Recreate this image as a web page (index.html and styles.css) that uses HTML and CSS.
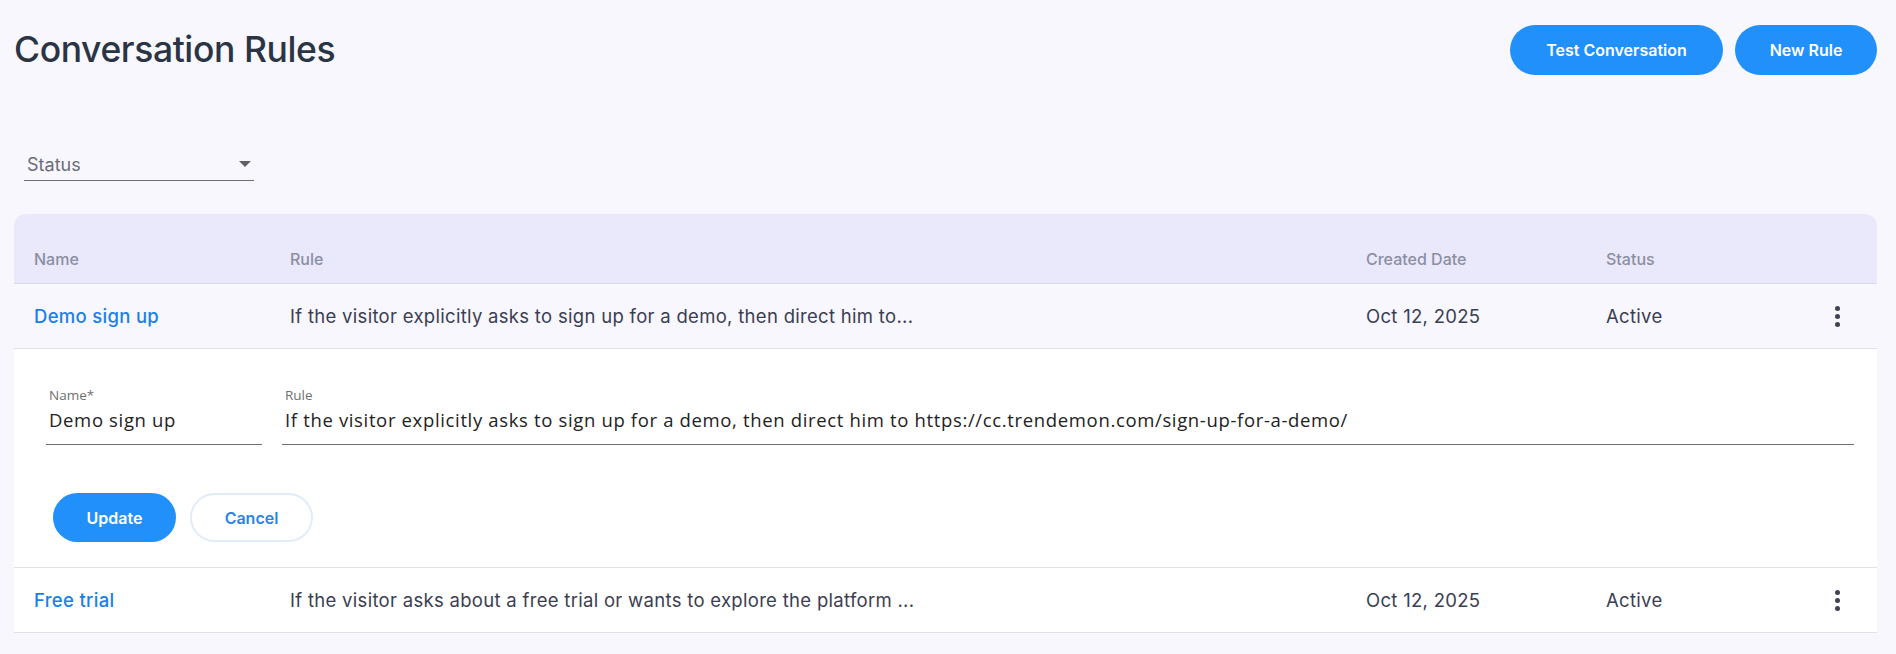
FILE: index.html
```html
<!DOCTYPE html>
<html>
<head>
  <title>Conversation Rules</title>
  <link rel="stylesheet" href="styles.css">
</head>
<body>
  <div class="page">
    <div class="top">
      <h1>Conversation Rules</h1>
      <div class="actions">
        <button class="btn btn-primary btn-test">Test Conversation</button>
        <button class="btn btn-primary btn-new">New Rule</button>
      </div>
    </div>

    <div class="filter">
      <span>Status</span>
      <span class="caret"></span>
    </div>

    <div class="card">
      <div class="row head">
        <div>Name</div>
        <div>Rule</div>
        <div>Created Date</div>
        <div>Status</div>
        <div></div>
      </div>

      <div class="row selected">
        <div class="name">Demo sign up</div>
        <div>If the visitor explicitly asks to sign up for a demo, then direct him to...</div>
        <div>Oct 12, 2025</div>
        <div>Active</div>
        <div class="more"><span></span><span></span><span></span></div>
      </div>

      <div class="editor">
        <div class="fields">
          <div class="field field-name">
            <label>Name*</label>
            <div class="value">Demo sign up</div>
          </div>
          <div class="field field-rule">
            <label>Rule</label>
            <div class="value">If the visitor explicitly asks to sign up for a demo, then direct him to https://cc.trendemon.com/sign-up-for-a-demo/</div>
          </div>
        </div>
        <div class="editor-actions">
          <button class="btn btn-primary btn-small">Update</button>
          <button class="btn btn-outline btn-small">Cancel</button>
        </div>
      </div>

      <div class="row">
        <div class="name">Free trial</div>
        <div>If the visitor asks about a free trial or wants to explore the platform ...</div>
        <div>Oct 12, 2025</div>
        <div>Active</div>
        <div class="more"><span></span><span></span><span></span></div>
      </div>
    </div>
  </div>
</body>
</html>
```

FILE: styles.css
```css
body {
  margin: 0;
  background: #f7f7fd;
  font-family: "Inter", "Liberation Sans", sans-serif;
  color: #3b3e52;
}

.page {
  padding: 25px 19px 0 14px;
}

.top {
  display: flex;
  justify-content: space-between;
  align-items: flex-start;
}

h1 {
  margin: 0;
  font-size: 35.5px;
  line-height: 50px;
  font-weight: 500;
  color: #2b3445;
  letter-spacing: -0.4px;
}

.actions {
  display: flex;
  gap: 12px;
}

.btn {
  border: none;
  border-radius: 25px;
  height: 50px;
  font-family: "Inter", "Liberation Sans", sans-serif;
  font-size: 16px;
  font-weight: 600;
  cursor: pointer;
}

.btn-primary {
  background: #2190fb;
  color: #fff;
}

.btn-test { width: 213px; }
.btn-new { width: 142px; }

.btn-small {
  width: 123px;
  height: 49px;
}

.btn-outline {
  background: #fff;
  color: #2a84e6;
  border: 2px solid #e1ecf8;
}

/* status filter */
.filter {
  margin: 73px 0 0 10px;
  width: 230px;
  height: 33px;
  border-bottom: 1px solid #6e6e78;
  display: flex;
  align-items: center;
  justify-content: space-between;
  font-size: 18px;
  color: #6a6c78;
  padding: 0 2px 0 3px;
  box-sizing: border-box;
}

.caret {
  width: 0;
  height: 0;
  border-left: 6px solid transparent;
  border-right: 6px solid transparent;
  border-top: 6px solid #5f6068;
  margin-right: 1px;
}

/* table */
.card {
  margin-top: 33px;
  border-radius: 12px 12px 0 0;
  overflow: hidden;
}

.row {
  display: grid;
  grid-template-columns: 256px 1076px 240px 1fr 40px;
  align-items: center;
  padding: 0 20px;
  height: 64px;
  border-bottom: 1px solid #e1e1e8;
  background: #fff;
  font-size: 18.5px;
  letter-spacing: 0.3px;
}

.row.head {
  height: 70px;
  box-sizing: border-box;
  align-items: end;
  padding-bottom: 14px;
  background: #eae8fb;
  color: #8b8fa3;
  font-size: 16px;
  font-weight: 500;
  letter-spacing: 0;
  border-bottom: 1px solid #dcdce8;
}

.row.selected {
  background: #f7f7fd;
}

.name {
  color: #1b7fe6;
  font-weight: 500;
}

.more {
  display: flex;
  flex-direction: column;
  align-items: center;
  gap: 3px;
}

.more span {
  width: 5px;
  height: 5px;
  border-radius: 50%;
  background: #3f4254;
}

/* inline editor */
.editor {
  background: #fff;
  padding: 38px 23px 25px 32px;
  border-bottom: 1px solid #e1e1e8;
}

.fields {
  display: flex;
  gap: 20px;
}

.field {
  border-bottom: 1px solid #707070;
  padding-bottom: 12px;
  font-family: "Open Sans", "Liberation Sans", sans-serif;
}

.field-name { width: 216px; }
.field-rule { flex: 1; }

.field label {
  display: block;
  font-size: 13.5px;
  line-height: 16px;
  color: #6f6f6f;
  padding-left: 3px;
}

.field .value {
  margin-top: 5px;
  font-size: 18.5px;
  line-height: 24px;
  color: #222;
  padding-left: 3px;
  letter-spacing: 0.65px;
}

.editor-actions {
  margin: 48px 0 0 7px;
  display: flex;
  gap: 14px;
}
```
